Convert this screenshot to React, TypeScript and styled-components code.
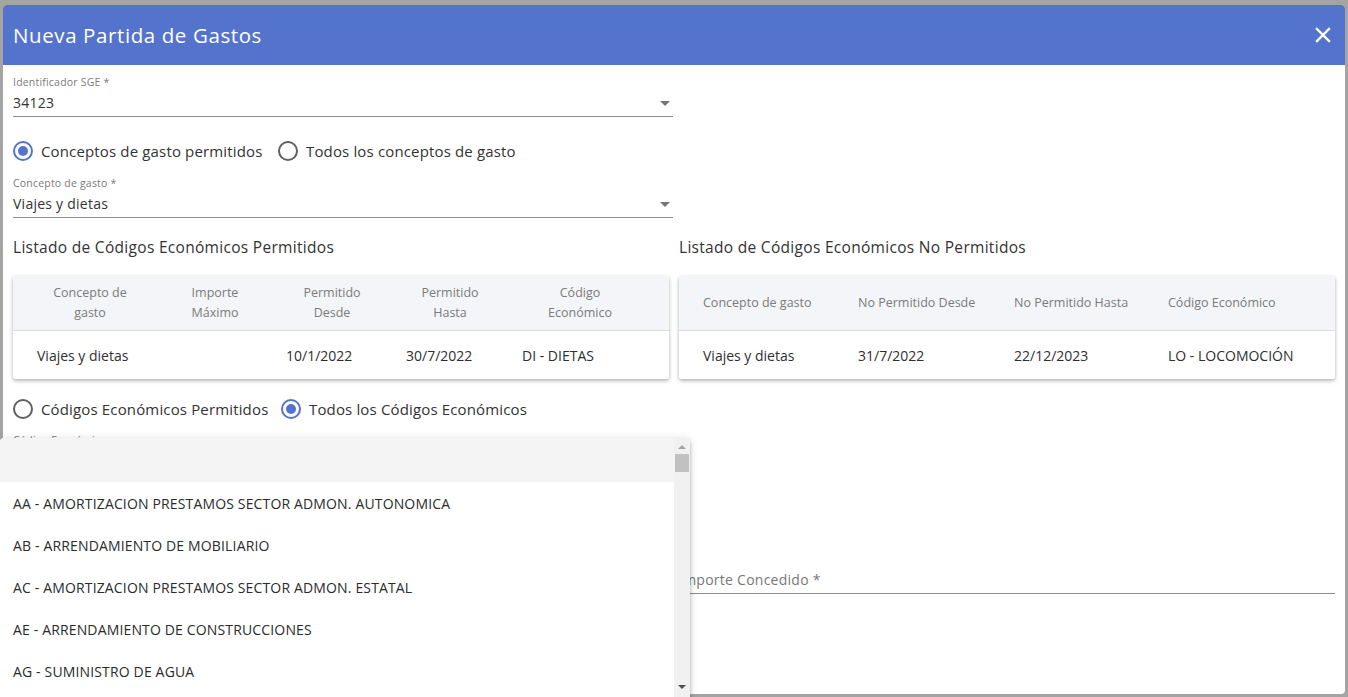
import React from 'react';
import styled, { createGlobalStyle } from 'styled-components';

const GlobalStyle = createGlobalStyle`
  html, body {
    margin: 0;
    padding: 0;
    background: #a4a4a4;
    font-family: "Open Sans", "Noto Sans", sans-serif;
    color: #333;
  }
  * { box-sizing: border-box; }
`;

const Page = styled.div`
  position: relative;
  width: 1348px;
  height: 697px;
  overflow: hidden;
  padding: 5px 3px 3px 3px;
`;

const Dialog = styled.div`
  height: 689px;
  background: #fff;
  border-radius: 4px;
  overflow: hidden;
  display: flex;
  flex-direction: column;
`;

const Header = styled.div`
  height: 60px;
  flex-shrink: 0;
  background: #5473cc;
  display: flex;
  align-items: center;
  justify-content: space-between;
  padding: 0 13px 0 10px;
`;

const Title = styled.h2`
  margin: 0;
  color: #fff;
  font-size: 20.5px;
  font-weight: 500;
  letter-spacing: 0.6px;
`;

const CloseButton = styled.button`
  border: 0;
  background: none;
  padding: 0;
  width: 18px;
  height: 18px;
  display: flex;
  align-items: center;
  justify-content: center;
  cursor: pointer;
`;

const Body = styled.div`
  padding: 10px 10px 0 10px;
  display: flex;
  flex-direction: column;
`;

const Field = styled.div<{ $width?: string; $mt?: number }>`
  width: ${(p) => p.$width || '660px'};
  margin-top: ${(p) => p.$mt || 0}px;
  border-bottom: 1px solid #8c8c8c;
  padding-bottom: 3px;
`;

const FieldLabel = styled.div`
  font-size: 10.5px;
  line-height: 14px;
  color: #7a7a7a;
  letter-spacing: 0.2px;
`;

const FieldValue = styled.div`
  margin-top: 4px;
  font-size: 14px;
  line-height: 20px;
  display: flex;
  align-items: center;
  justify-content: space-between;
  letter-spacing: 0.25px;
`;

const Placeholder = styled.span`
  color: #777;
`;

const Arrow = styled.span`
  width: 0;
  height: 0;
  border-left: 5px solid transparent;
  border-right: 5px solid transparent;
  border-top: 5px solid #757575;
  margin-right: 3px;
`;

const RadioRow = styled.div<{ $mt: number }>`
  display: flex;
  align-items: center;
  margin-top: ${(p) => p.$mt}px;
  height: 20px;
`;

const RadioItem = styled.label<{ $width?: number }>`
  display: flex;
  align-items: center;
  gap: 8px;
  font-size: 15px;
  letter-spacing: 0.15px;
  width: ${(p) => (p.$width ? `${p.$width}px` : 'auto')};
`;

const RadioCircle = styled.span<{ $on?: boolean }>`
  width: 20px;
  height: 20px;
  border-radius: 50%;
  border: 2px solid ${(p) => (p.$on ? '#5473cc' : '#606060')};
  display: flex;
  align-items: center;
  justify-content: center;
  &::after {
    content: '';
    width: 10px;
    height: 10px;
    border-radius: 50%;
    background: ${(p) => (p.$on ? '#5473cc' : 'transparent')};
  }
`;

const TwoCols = styled.div<{ $mt: number }>`
  display: grid;
  grid-template-columns: 656px 656px;
  column-gap: 10px;
  margin-top: ${(p) => p.$mt}px;
`;

const SectionTitle = styled.h3`
  margin: 0 0 19px 0;
  font-size: 15.5px;
  line-height: 20px;
  font-weight: 400;
  letter-spacing: 0.3px;
`;

const Card = styled.div`
  background: #fff;
  box-shadow: 0 2px 4px rgba(0, 0, 0, 0.22), 0 1px 3px rgba(0, 0, 0, 0.12);
  border-radius: 2px;
`;

const HeadRow = styled.div<{ $cols: string }>`
  display: grid;
  grid-template-columns: ${(p) => p.$cols};
  align-items: center;
  height: 55px;
  padding: 0 24px;
  background: #f3f5f8;
  border-bottom: 1px solid #d8dde3;
`;

const HeadCell = styled.div<{ $center?: boolean }>`
  font-size: 12.5px;
  line-height: 20px;
  color: #7b7b7b;
  text-align: ${(p) => (p.$center ? 'center' : 'left')};
`;

const BodyRow = styled.div<{ $cols: string }>`
  display: grid;
  grid-template-columns: ${(p) => p.$cols};
  align-items: center;
  height: 48px;
  padding: 0 24px;
`;

const BodyCell = styled.div`
  font-size: 14px;
  color: #2f2f2f;
  white-space: nowrap;
`;

const Panel = styled.div`
  position: absolute;
  left: 0;
  top: 438px;
  width: 690px;
  height: 262px;
  background: #fff;
  box-shadow: 0 2px 4px -1px rgba(0, 0, 0, 0.2), 0 4px 5px rgba(0, 0, 0, 0.14), 0 1px 10px rgba(0, 0, 0, 0.12);
  border-radius: 4px 4px 0 0;
  display: flex;
  overflow: hidden;
`;

const OptionList = styled.div`
  flex: 1;
  display: flex;
  flex-direction: column;
`;

const Option = styled.div<{ $active?: boolean }>`
  height: 42px;
  flex-shrink: 0;
  display: flex;
  align-items: center;
  padding: 0 13px;
  font-size: 14px;
  letter-spacing: 0.15px;
  color: #2b2b2b;
  background: ${(p) => (p.$active ? '#f4f4f4' : '#fff')};
  &:first-child {
    height: 44px;
  }
`;

const Scrollbar = styled.div`
  width: 16px;
  background: #f1f1f1;
  display: flex;
  flex-direction: column;
  align-items: center;
  padding-top: 7px;
`;

const ScrollArrow = styled.span<{ $down?: boolean }>`
  width: 0;
  height: 0;
  border-left: 4px solid transparent;
  border-right: 4px solid transparent;
  ${(p) => (p.$down ? 'border-top: 4px solid #505050;' : 'border-bottom: 4px solid #a3a3a3;')}
`;

const Thumb = styled.div`
  margin-top: 5px;
  width: 14px;
  height: 18px;
  background: #c1c1c1;
`;

const ScrollSpacer = styled.div`
  flex: 1;
`;

const DownWrap = styled.div`
  height: 21px;
  display: flex;
  align-items: flex-start;
  padding-top: 6px;
`;

const leftHead = '106px 144px 90px 146px 114px';
const leftBody = '125px 124px 120px 116px 1fr';
const rightCols = '155px 156px 154px 1fr';

const options = [
  '',
  'AA - AMORTIZACION PRESTAMOS SECTOR ADMON. AUTONOMICA',
  'AB - ARRENDAMIENTO DE MOBILIARIO',
  'AC - AMORTIZACION PRESTAMOS SECTOR ADMON. ESTATAL',
  'AE - ARRENDAMIENTO DE CONSTRUCCIONES',
  'AG - SUMINISTRO DE AGUA',
];

export default function App() {
  return (
    <>
      <GlobalStyle />
      <Page>
        <Dialog>
          <Header>
            <Title>Nueva Partida de Gastos</Title>
            <CloseButton aria-label="Cerrar">
              <svg width="16" height="16" viewBox="0 0 16 16">
                <path d="M2 2 L14 14 M14 2 L2 14" stroke="#fff" strokeWidth="2.4" strokeLinecap="square" />
              </svg>
            </CloseButton>
          </Header>
          <Body>
            <Field>
              <FieldLabel>Identificador SGE *</FieldLabel>
              <FieldValue>
                <span>34123</span>
                <Arrow />
              </FieldValue>
            </Field>

            <RadioRow $mt={24}>
              <RadioItem $width={265}>
                <RadioCircle $on />
                Conceptos de gasto permitidos
              </RadioItem>
              <RadioItem>
                <RadioCircle />
                Todos los conceptos de gasto
              </RadioItem>
            </RadioRow>

            <Field $mt={15}>
              <FieldLabel>Concepto de gasto *</FieldLabel>
              <FieldValue>
                <span>Viajes y dietas</span>
                <Arrow />
              </FieldValue>
            </Field>

            <TwoCols $mt={19}>
              <div>
                <SectionTitle>Listado de Códigos Económicos Permitidos</SectionTitle>
                <Card>
                  <HeadRow $cols={leftHead}>
                    <HeadCell $center>Concepto de<br />gasto</HeadCell>
                    <HeadCell $center>Importe<br />Máximo</HeadCell>
                    <HeadCell $center>Permitido<br />Desde</HeadCell>
                    <HeadCell $center>Permitido<br />Hasta</HeadCell>
                    <HeadCell $center>Código<br />Económico</HeadCell>
                  </HeadRow>
                  <BodyRow $cols={leftBody}>
                    <BodyCell>Viajes y dietas</BodyCell>
                    <BodyCell />
                    <BodyCell>10/1/2022</BodyCell>
                    <BodyCell>30/7/2022</BodyCell>
                    <BodyCell>DI - DIETAS</BodyCell>
                  </BodyRow>
                </Card>
              </div>
              <div>
                <SectionTitle>Listado de Códigos Económicos No Permitidos</SectionTitle>
                <Card>
                  <HeadRow $cols={rightCols}>
                    <HeadCell>Concepto de gasto</HeadCell>
                    <HeadCell>No Permitido Desde</HeadCell>
                    <HeadCell>No Permitido Hasta</HeadCell>
                    <HeadCell>Código Económico</HeadCell>
                  </HeadRow>
                  <BodyRow $cols={rightCols}>
                    <BodyCell>Viajes y dietas</BodyCell>
                    <BodyCell>31/7/2022</BodyCell>
                    <BodyCell>22/12/2023</BodyCell>
                    <BodyCell>LO - LOCOMOCIÓN</BodyCell>
                  </BodyRow>
                </Card>
              </div>
            </TwoCols>

            <RadioRow $mt={20}>
              <RadioItem $width={268}>
                <RadioCircle />
                Códigos Económicos Permitidos
              </RadioItem>
              <RadioItem>
                <RadioCircle $on />
                Todos los Códigos Económicos
              </RadioItem>
            </RadioRow>

            <Field $mt={14}>
              <FieldLabel>Código Económico</FieldLabel>
              <FieldValue>
                <span>&nbsp;</span>
                <Arrow />
              </FieldValue>
            </Field>

            <TwoCols $mt={91}>
              <div />
              <Field $width="656px">
                <FieldValue>
                  <Placeholder>Importe Concedido *</Placeholder>
                </FieldValue>
              </Field>
            </TwoCols>
          </Body>
        </Dialog>

        <Panel>
          <OptionList>
            {options.map((o, i) => (
              <Option key={i} $active={i === 0}>
                {o}
              </Option>
            ))}
          </OptionList>
          <Scrollbar>
            <ScrollArrow />
            <Thumb />
            <ScrollSpacer />
            <DownWrap>
              <ScrollArrow $down />
            </DownWrap>
          </Scrollbar>
        </Panel>
      </Page>
    </>
  );
}
